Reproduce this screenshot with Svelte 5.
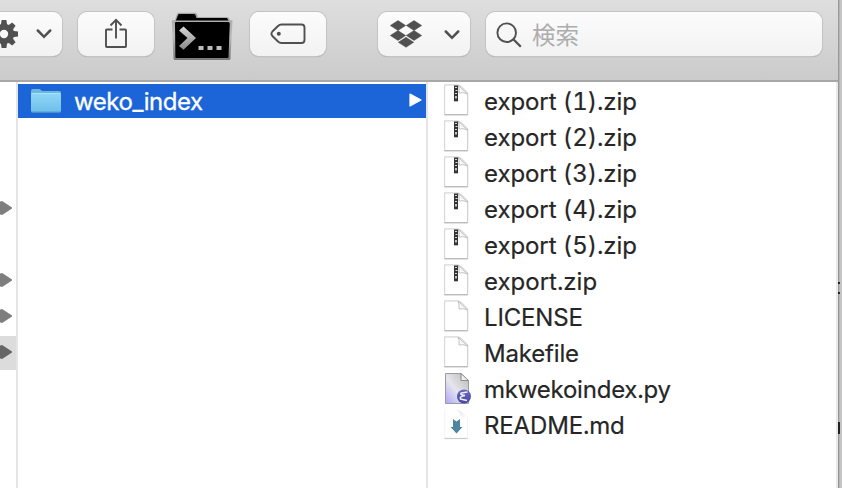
<script>
  const files = [
    { name: 'export (1).zip', kind: 'zip', spacing: -0.07 },
    { name: 'export (2).zip', kind: 'zip', spacing: -0.07 },
    { name: 'export (3).zip', kind: 'zip', spacing: -0.07 },
    { name: 'export (4).zip', kind: 'zip', spacing: -0.07 },
    { name: 'export (5).zip', kind: 'zip', spacing: -0.07 },
    { name: 'export.zip', kind: 'zip', spacing: 0 },
    { name: 'LICENSE', kind: 'plain', spacing: -0.15 },
    { name: 'Makefile', kind: 'plain', spacing: -0.18 },
    { name: 'mkwekoindex.py', kind: 'emacs', spacing: -0.22 },
    { name: 'README.md', kind: 'markdown', spacing: -0.15 },
  ];
  // Parent column: which rows are folders, and which one is open
  const parents = ['', '', '', 'folder', '', 'folder', 'folder', 'open'];
</script>

{#snippet chevron()}
  <svg class="chevron" width="16" height="10" viewBox="0 0 16 10"><path d="M1.8 1.5 8 7.8 14.2 1.5" fill="none" stroke="#505050" stroke-width="2.5" stroke-linecap="round" /></svg>
{/snippet}

<div class="window">
  <main>
    <header>
      <div class="button gear">
        <svg width="28" height="30" viewBox="-14 -15 28 30">
          <g fill="#505050">
            {#each [0, 45, 90, 135, 180, 225, 270, 315] as a}
              <path d="M-3.300-8-2.400-14H2.400L3.300-8Z" transform="rotate({a})" />
            {/each}
          </g>
          <circle r="7.200" fill="none" stroke="#505050" stroke-width="6" />
        </svg>
        {@render chevron()}
      </div>
      <div class="button share">
        <svg width="24" height="32" viewBox="0 0 24 32"><path d="M8.500 11.500H2.800Q2 11.500 2 12.300V28.200Q2 29 2.800 29H21.200Q22 29 22 28.200V12.300Q22 11.500 21.200 11.500H15.500M12 20.500V2M6.500 7.500 12 1.800 17.500 7.500" fill="none" stroke="#505050" stroke-width="1.900" /></svg>
      </div>
      <div class="terminal">
        <svg width="62" height="50" viewBox="0 0 62 50">
          <defs>
            <linearGradient id="rim" x2="0" y2="1"><stop stop-color="#a6a6a6" /><stop offset=".5" stop-color="#bbb" /><stop offset="1" stop-color="#777" /></linearGradient>
            <linearGradient id="prompt" x2="0" y2="1"><stop stop-color="#d7d7d7" /><stop offset="1" stop-color="#888" /></linearGradient>
          </defs>
          <path d="M4 8 6 2Q6.500 .8 8 .8H24Q25.500 .8 26 2L27 5H56Q58 5 58.500 7L59 8 61.500 8.500 59.500 46.500Q59.500 48 58 48H4Q2.500 48 2.500 46.500L.8 8.500Z" fill="url(#rim)" />
          <path d="M5.500 7 7 3Q7.400 2 8.500 2H23Q24 2 24.500 3L25.500 6H56L57.500 8.500H4.800Z" fill="#000" />
          <path d="M4 11Q4 10 5 10H57Q59 10 58.800 12L57.500 45Q57.500 46 56.500 46H5.500Q4.500 46 4.400 45Z" fill="#000" />
          <path d="M8 18.500 12.500 14.500 25 26 12.500 37.800 8 34 16.500 26Z" fill="url(#prompt)" />
          <path d="M27.500 34h5v4h-5zM36.500 34h5v4h-5zM45.500 34h5v4h-5z" fill="#bdbdbd" />
        </svg>
      </div>
      <div class="button tag">
        <svg width="36" height="22" viewBox="0 0 36 22"><path d="M11.500 1.500H31.500Q34.500 1.500 34.500 4.500V17Q34.500 20 31.500 20H11.500Q9.500 20 8 18.500L2.400 13Q.5 10.750 2.400 8.500L8 3Q9.500 1.500 11.500 1.500Z" fill="none" stroke="#505050" stroke-width="1.900" /><circle cx="8.800" cy="10.700" r="2" fill="#505050" /></svg>
      </div>
      <div class="button dropbox">
        <svg width="32" height="28" viewBox="0 0 32 28"><path d="M.3 5.500 8 .5 15.700 5.500 8 10.500ZM16.300 5.500 24 .5 31.700 5.500 24 10.500ZM.3 15.500 8 10.500 15.700 15.500 8 20.500ZM16.300 15.500 24 10.500 31.700 15.500 24 20.500ZM8.300 22.300 16 17.300 23.700 22.300 16 27.300Z" fill="#505050" stroke="#505050" stroke-width=".5" /></svg>
        {@render chevron()}
      </div>
      <div class="button search">
        <svg width="26" height="26" viewBox="0 0 26 26"><circle cx="10.700" cy="10.700" r="9.300" fill="none" stroke="#505050" stroke-width="1.900" /><path d="M17.300 17.300 24.800 24.800" stroke="#505050" stroke-width="2.300" /></svg>
        <span>検索</span>
      </div>
    </header>

    <div class="columns">
      <div class="parents">
        {#each parents as p}
          <div class="parent" class:open={p === 'open'}>
            {#if p}
              <svg width="12" height="14" viewBox="0 0 12 14"><path d="M0 .8 1.500 0 2.500 .2 12 6.500V7.500L2.500 13.800 1.500 14 0 13.200Z" fill={p === 'open' ? '#666' : '#7e7e7e'} /></svg>
            {/if}
          </div>
        {/each}
      </div>

      <div class="folders">
        <div class="selected">
          <svg width="32" height="26" viewBox="0 0 32 26">
            <defs><linearGradient id="folder" x2="0" y2="1"><stop stop-color="#8fd5f8" /><stop offset="1" stop-color="#70bfea" /></linearGradient></defs>
            <path d="M1 3Q1 1 3 1H9Q10.500 1 11.500 2.500L12 3H29Q31 3 31 5V22.500Q31 24.500 29 24.500H3Q1 24.500 1 22.500Z" fill="#69b9df" />
            <path d="M1 6H31V22.500Q31 23.500 30 23.500H2Q1 23.500 1 22.500Z" fill="url(#folder)" />
            <path d="M1.500 5.500H30.500" stroke="#a9e0fa" />
            <path d="M1.500 24.200H30.500" stroke="#4f91c3" />
          </svg>
          <span>weko_index</span>
          <svg class="disclosure" width="13" height="14" viewBox="0 0 13 14"><path d="M1 1 12 7 1 13Z" fill="#fff" stroke="#fff" stroke-width="1.200" stroke-linejoin="round" /></svg>
        </div>
      </div>

      <div class="files">
        {#each files as f}
          <div class="file">
            <svg width="30" height="34" viewBox="0 0 30 34">
              {#if f.kind === 'emacs'}
                <defs>
                  <linearGradient id="page" x1="1" x2="0" y2="1"><stop offset=".15" stop-color="#c5c5c5" /><stop offset=".55" stop-color="#e6e6ec" /><stop offset="1" stop-color="#aaa5fb" /></linearGradient>
                  <linearGradient id="ball" x2="0" y2="1"><stop stop-color="#6a67bd" /><stop offset="1" stop-color="#4948a1" /></linearGradient>
                </defs>
                <path d="M1.500 1.500H17L24.500 9V31.500H1.500Z" fill="url(#page)" stroke="#9b9b9f" />
                <path d="M17 1.500V8.500H24.500Z" fill="#efefef" stroke="#777" stroke-width=".8" />
                <circle cx="20" cy="24.500" r="7" fill="url(#ball)" />
                <path d="M23.500 20 17.500 21Q15 22.500 21 23.500Q15 24.500 16.500 27L23 28.500" fill="none" stroke="#eeeefa" stroke-width="1.500" />
              {:else if f.kind === 'markdown'}
                <defs><linearGradient id="fold" x2="1" y2="1"><stop stop-color="#e3e3e3" /><stop offset="1" stop-color="#fff" /></linearGradient></defs>
                <path d="M.8 30V1.500M23.500 9V30" stroke="#f4f4f4" />
                <path d="M11 1.500Q16 2 16 8.500L24 10Q18 2 11 1.500Z" fill="url(#fold)" />
                <path d="M.5 30.500H23.500" stroke="#cacaca" stroke-width="1.200" />
                <path d="M9 11 12.500 13.500 16 11V19H18.500L12.500 25.500 6.500 19H9Z" fill="#4e86a0" />
              {:else}
                <path d="M1.500 1.500H14.500Q17 1.500 23.500 9.500V30.500H1.500Z" fill="none" stroke="#e9e9e9" stroke-width="2" />
                <path d="M1 1H14Q16 1 23.500 9V30.500H.7V1Z" fill="#fff" stroke="#c8c8c8" stroke-width=".8" />
                <path d="M.5 30.800H23.500" stroke="#aaa" stroke-width=".8" />
                <path d="M14 1Q15.500 3 15 9Q20 8 23.500 10Z" fill="#f7f7f7" stroke="#b5b5b5" stroke-width=".8" />
                {#if f.kind === 'zip'}
                  <path d="M10 1.500H14V17.300H10Z" fill="#333" />
                  <path d="M11 3.500H13M11.500 6.500H13.500M11 9.500H13" stroke="#ddd" stroke-width="1.100" />
                  <path d="M12 12V14.500" stroke="#fff" stroke-width="1.400" />
                {/if}
              {/if}
            </svg>
            <span style:letter-spacing="{f.spacing}px">{f.name}</span>
          </div>
        {/each}
      </div>
      <div class="edge"></div>
    </div>
  </main>
  <aside><i class="dot one"></i><i class="dot two"></i><i class="dot bar"></i></aside>
</div>

<style>
  :global(body) { margin: 0; overflow: hidden; }
  .window { display: flex; width: 842px; height: 488px; background: #fff; font: 24px/36px Inter, "Noto Sans CJK JP", sans-serif; color: #262626; }
  main { width: 838px; display: flex; flex-direction: column; }
  header { box-sizing: border-box; height: 82px; padding-top: 12px; display: flex; align-items: flex-start; background: linear-gradient(#dedede, #cbcbcb); border-bottom: 2px solid #aaa7a9; }
  svg { display: block; flex: none; }
  .button { box-sizing: border-box; height: 44px; border-radius: 9px; display: flex; align-items: center; justify-content: center; background: linear-gradient(#fcfcfc, #f2f2f2); box-shadow: 0 0 0 1px #c3c3c3, 0 1px 1px #989898; }
  .gear { width: 72px; margin: 0 16px 0 -10px; justify-content: flex-start; }
  .gear .chevron { margin-left: 18px; }
  .share { width: 76px; padding-bottom: 1px; }
  .terminal { width: 62px; margin: 0 17px; }
  .tag { width: 76px; }
  .dropbox { width: 92px; margin: 0 16px 0 52px; justify-content: flex-start; padding-left: 12px; }
  .dropbox .chevron { margin-left: 22px; margin-top: 1px; }
  .search { width: 336px; justify-content: flex-start; padding-left: 10px; color: #adadad; font-family: "Noto Sans CJK JP", sans-serif; }
  .search svg { margin-top: 2px; }
  .search span { margin-left: 10px; font-size: 23.500px; }
  .columns { flex: 1; min-height: 0; display: flex; }
  .parents { width: 16px; padding-top: 2px; border-right: 2px solid #e5e5e5; }
  .parent { box-sizing: border-box; height: 34px; margin-bottom: 2px; padding-top: 9px; }
  .open { background: #dcdcdc; }
  .folders { width: 408px; padding-top: 2px; border-right: 2px solid #e5e5e5; }
  .selected { height: 34px; display: flex; align-items: center; padding-left: 12px; background: #1c65d9; color: #fff; }
  .selected svg { margin-top: -1px; }
  .selected span { margin: 2px 0 0 12px; letter-spacing: -.45px; -webkit-text-stroke: .3px; }
  .selected .disclosure { margin: 0 4px 2px auto; }
  .files { flex: 1; padding-top: 2px; }
  .file { height: 36px; display: flex; align-items: flex-start; padding-left: 16px; white-space: nowrap; font-feature-settings: "tnum"; }
  .file span { margin-left: 10px; -webkit-text-stroke: .2px; }
  .edge { width: 2px; background: #e9e9e9; }
  aside { position: relative; width: 4px; background: linear-gradient(90deg, #999 0 1px, #b5b5b5 1px 2px, #c5c5c5 2px); }
  .dot { position: absolute; left: 0; width: 2px; height: 2px; background: #222; }
  .one { top: 282px; }
  .two { top: 292px; }
  .bar { top: 422px; height: 12px; }
</style>
